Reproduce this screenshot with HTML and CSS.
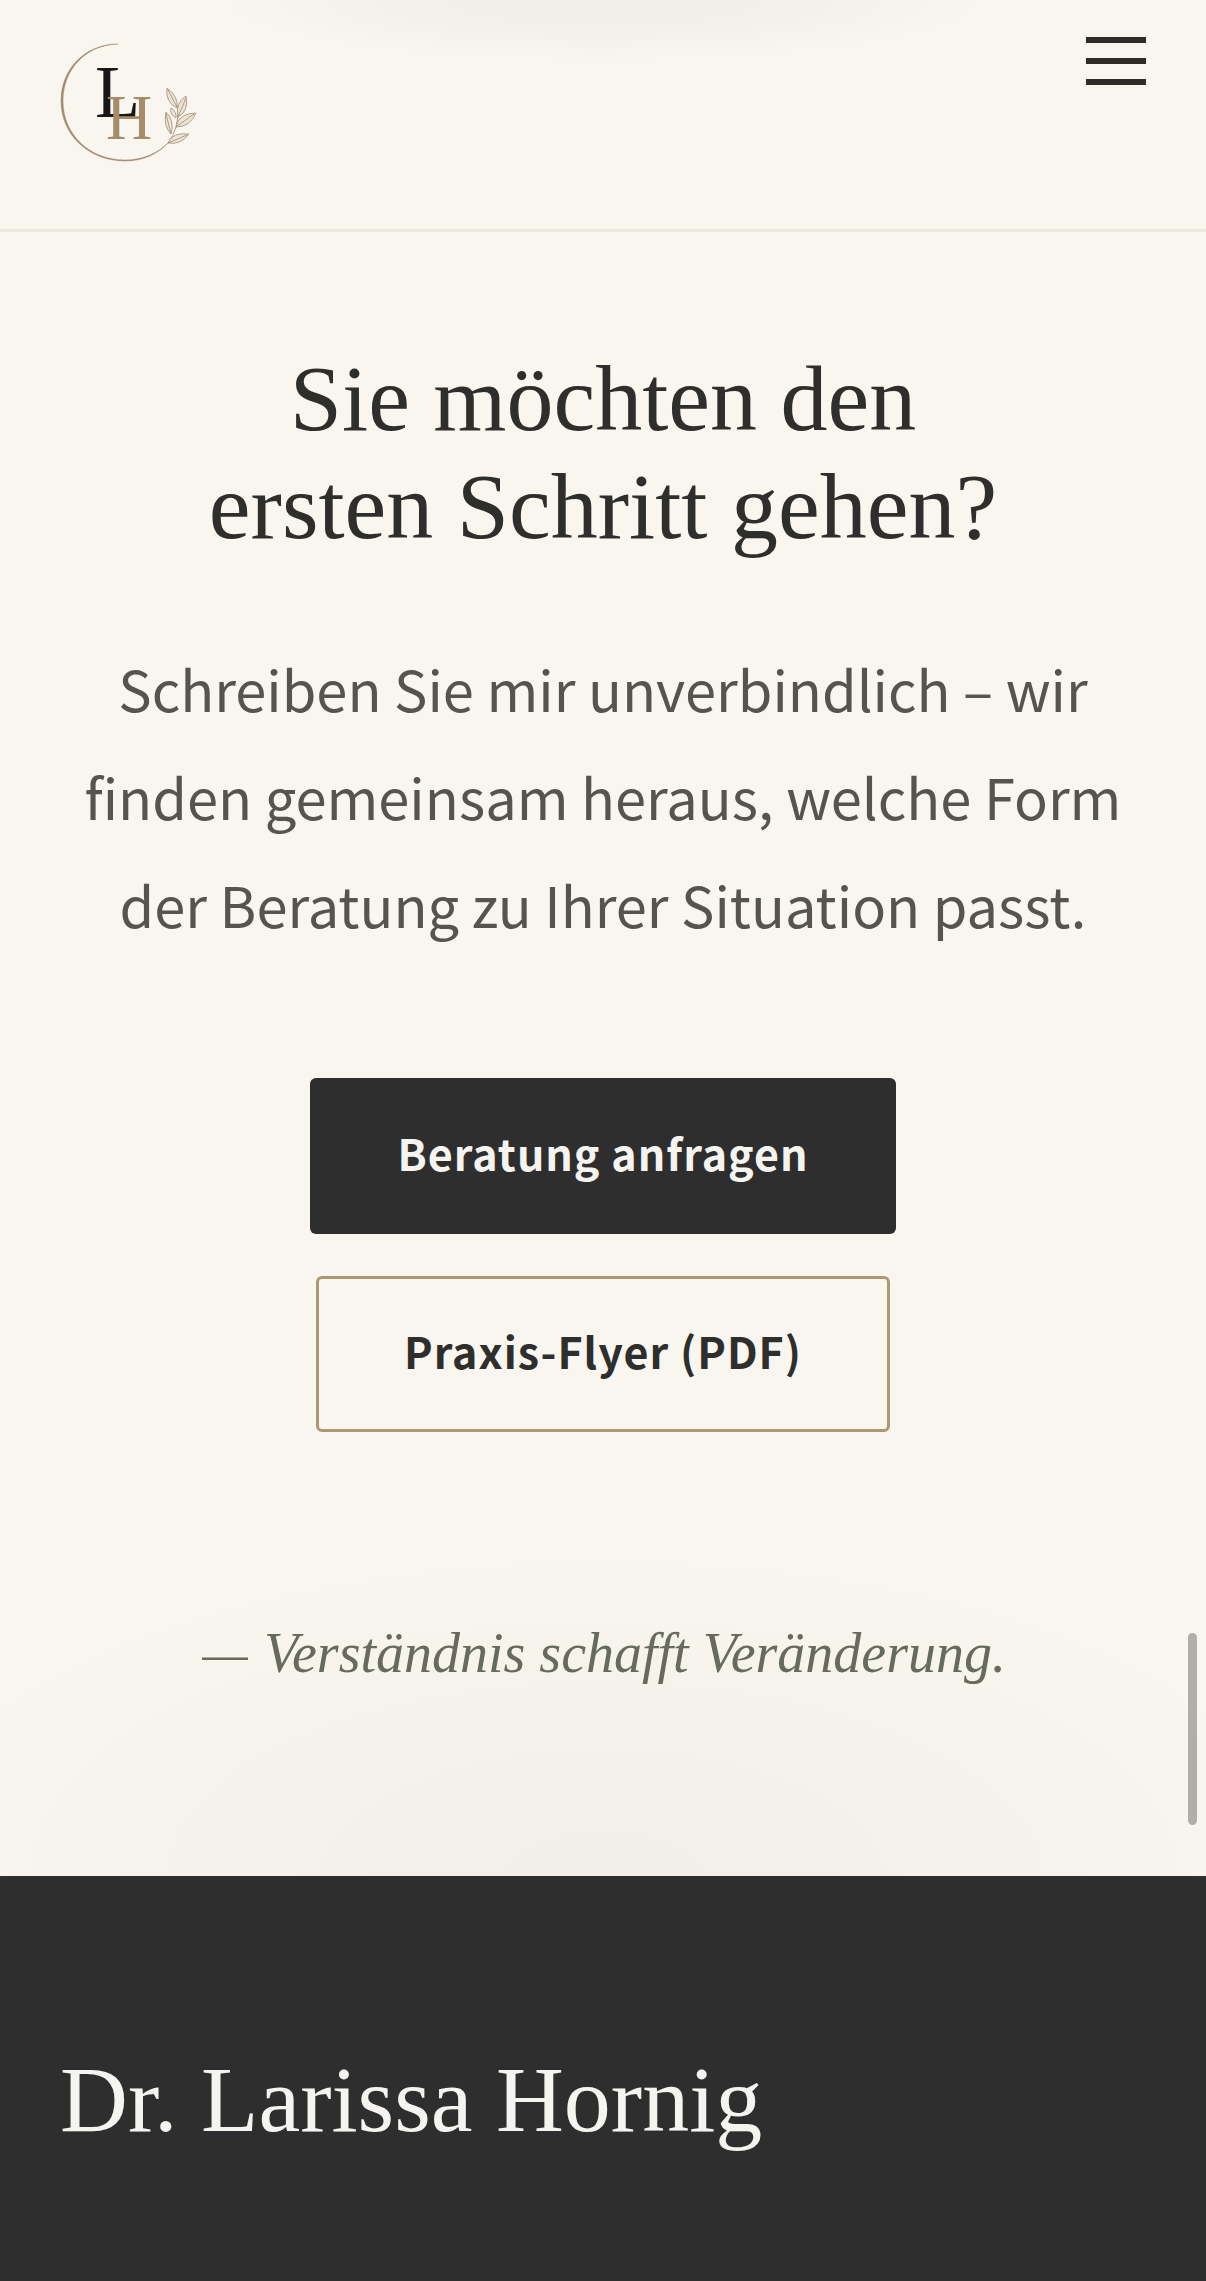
FILE: index.html
```html
<!DOCTYPE html>
<html lang="de">
<head>
    <meta charset="UTF-8">
    <meta name="viewport" content="width=device-width, initial-scale=1.0">
    <title>Dr. Larissa Hornig</title>
    <link rel="stylesheet" href="styles.css">
</head>
<body>
    <header class="header">
        <a class="logo" href="#" aria-label="Startseite">
            <svg viewBox="0 0 144 124" width="144" height="124">
                <!-- open circle, thinner towards the tips -->
                <path class="ring" d="M58 4 C25 4 1 29 1 61 C1 95 29 121 65 121 C83 121 98 114 108 103 C98 113 83 120 65 120 C30 120 3 95 3 61 C3 29 26 5 58 4Z"/>
                <text class="letter-l" x="35" y="77">L</text>
                <text class="letter-h" x="46" y="99">H</text>
                <!-- branch -->
                <g class="branch">
                    <path class="stem" d="M108 103 Q119 89 118 67"/>
                    <path d="M117 68 Q105 62 107 48 Q119 57 117 68Z"/>
                    <path d="M118 77 Q115 63 126 56 Q129 71 118 77Z"/>
                    <path d="M116 78 Q109 73 111 68 Q117 72 116 78Z"/>
                    <path d="M116 87 Q119 73 136 73 Q130 87 116 87Z"/>
                    <path d="M111 94 Q103 86 106 72 Q115 81 111 94Z"/>
                    <path d="M108 103 Q112 92 129 94 Q121 105 108 103Z"/>
                    <path d="M108 50 L117 67 M126 58 L118 77 M134 74 L116 87 M106 74 L111 94 M127 95 L108 103"/>
                </g>
            </svg>
        </a>
        <button class="menu-toggle" type="button" aria-label="Menü öffnen">
            <span></span>
            <span></span>
            <span></span>
        </button>
    </header>

    <main class="cta">
        <h1>Sie möchten den<br>ersten Schritt gehen?</h1>
        <p class="cta-text">Schreiben Sie mir unverbindlich – wir finden gemeinsam heraus, welche Form der Beratung zu Ihrer Situation passt.</p>
        <div class="cta-buttons">
            <a class="btn btn-dark" href="#">Beratung anfragen</a>
            <a class="btn btn-outline" href="#">Praxis-Flyer (PDF)</a>
        </div>
        <p class="claim"><span class="dash">—</span> Verständnis schafft Veränderung.</p>
    </main>

    <footer class="footer">
        <h2>Dr. Larissa Hornig</h2>
    </footer>

    <div class="scroll-thumb"></div>
</body>
</html>
```
FILE: styles.css
```css
* {
    box-sizing: border-box;
}

body {
    margin: 0;
    background-color: #f9f6f0;
    color: #2e2e2c;
    font-family: "Noto Sans CJK SC", "Noto Sans", sans-serif;
}

h1, h2 {
    margin: 0;
    font-family: "Liberation Serif", serif;
    font-size: 94px;
    font-weight: 400;
    line-height: 108px;
}

.header {
    display: flex;
    justify-content: space-between;
    align-items: flex-start;
    padding: 37px 60px 65px;
    border-bottom: 3px solid #ece9e0;
    background: radial-gradient(ellipse 380px 60px at 50% 0, #f1efea, #f3f0e9 50%, #f9f6f0);
}

.logo {
    display: block;
    padding-top: 3px;
}

.logo svg {
    display: block;
    overflow: visible;
}

.ring {
    fill: #a08a6c;
    stroke: #a08a6c;
    stroke-width: 0.5;
}

.letter-l,
.letter-h {
    font-family: "Liberation Serif", serif;
}

.letter-l {
    font-size: 74px;
    fill: #171717;
}

.letter-h {
    font-size: 64px;
    fill: #a68c6a;
}

.branch {
    fill: #ede4d8;
    stroke: #a08a6c;
    stroke-width: 0.8;
}

.stem {
    fill: none;
}

.menu-toggle {
    display: flex;
    flex-direction: column;
    gap: 15px;
    padding: 0;
    border: none;
    background: none;
    cursor: pointer;
}

.menu-toggle span {
    width: 60px;
    height: 6px;
    background-color: #2e2c29;
}

.cta {
    padding: 112px 60px 169px;
    text-align: center;
    background: radial-gradient(ellipse 60% 320px at 50% 100%, #f2efea, #f5f2eb 50%, #f9f6f0);
}

.cta-text {
    margin: 74px 0 120px;
    font-size: 56px;
    line-height: 108px;
    color: #55544e;
}

.cta-buttons {
    display: flex;
    flex-direction: column;
    align-items: center;
    gap: 42px;
}

.btn {
    padding: 41px 88px 49px;
    border-radius: 6px;
    font-size: 43px;
    font-weight: 700;
    line-height: 66px;
    letter-spacing: 1px;
    text-decoration: none;
}

.btn-dark {
    background-color: #2e2e2e;
    color: #f6f4f0;
}

.btn-outline {
    padding: 38px 85px 46px;
    border: 3px solid #ab9a70;
    color: #2e2e2c;
}

.claim {
    margin: 167px 0 0;
    font-family: "Liberation Serif", serif;
    font-size: 56px;
    font-style: italic;
    line-height: 108px;
    color: #666b5e;
}

.dash {
    font-family: "Noto Sans", sans-serif;
    font-size: 50px;
    font-style: normal;
    font-weight: 300;
    line-height: 1;
}

.footer {
    padding: 169px 60px 128px;
    background-color: #2e2e2e;
    color: #f6f4f0;
}

/* overlay scrollbar */
.scroll-thumb {
    position: fixed;
    top: 1633px;
    right: 9px;
    width: 9px;
    height: 192px;
    border-radius: 5px;
    background-color: #b0afa7;
}
```
